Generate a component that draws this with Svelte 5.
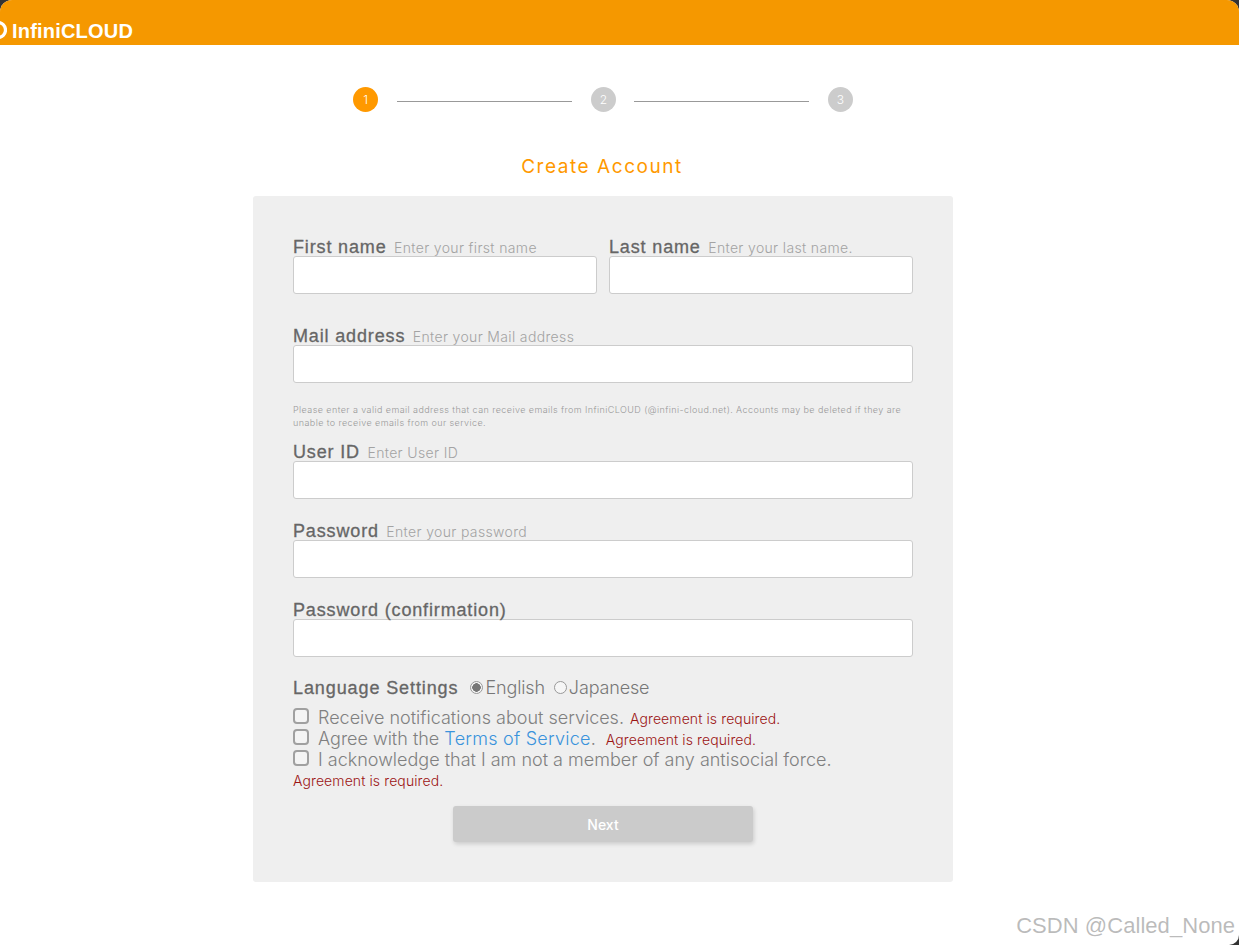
<script lang="ts">
	const steps = [1, 2, 3];
	const agreement = "Agreement is required.";
</script>

<div class="page">
	<header class="topbar">
		<div class="logo">
			<svg class="mark" width="7" height="20" viewBox="0 0 7 20">
				<circle cx="-2" cy="10" r="7.5" fill="none" stroke="#fff" stroke-width="3.2" />
			</svg>
			<span>InfiniCLOUD</span>
		</div>
	</header>

	<main class="content">
		<div class="stepper">
			{#each steps as step, i}
				{#if i > 0}
					<span class="line" class:first={i === 1}></span>
				{/if}
				<span class="step" class:active={step === 1}>{step}</span>
			{/each}
		</div>

		<h1>Create Account</h1>

		<form class="card">
			<div class="name-row">
				<div class="field">
					<label for="first"><b>First name</b> <small>Enter your first name</small></label>
					<input id="first" type="text" />
				</div>
				<div class="field">
					<label for="last"><b>Last name</b> <small>Enter your last name.</small></label>
					<input id="last" type="text" />
				</div>
			</div>

			<div class="field mail">
				<label for="mail"><b>Mail address</b> <small>Enter your Mail address</small></label>
				<input id="mail" type="text" />
			</div>
			<p class="note">Please enter a valid email address that can receive emails from InfiniCLOUD (@infini-cloud.net). Accounts may be deleted if they are unable to receive emails from our service.</p>

			<div class="field userid">
				<label for="uid"><b>User ID</b> <small>Enter User ID</small></label>
				<input id="uid" type="text" />
			</div>
			<div class="field">
				<label for="pw"><b>Password</b> <small>Enter your password</small></label>
				<input id="pw" type="password" />
			</div>
			<div class="field">
				<label for="pw2"><b>Password (confirmation)</b></label>
				<input id="pw2" type="password" />
			</div>

			<div class="language">
				<b>Language Settings</b>
				<label class="radio"><input type="radio" name="lang" checked />English</label>
				<label class="radio"><input type="radio" name="lang" />Japanese</label>
			</div>

			<div class="agree">
				<div class="check">
					<input type="checkbox" />
					<span>Receive notifications about services.</span>
					<em>{agreement}</em>
				</div>
				<div class="check">
					<input type="checkbox" />
					<span>Agree with the <a href="#terms">Terms of Service</a>.</span>
					<em class="wide">{agreement}</em>
				</div>
				<div class="check">
					<input type="checkbox" />
					<span>I acknowledge that I am not a member of any antisocial force.</span>
				</div>
				<em class="own-line">{agreement}</em>
			</div>

			<button type="button" class="next">Next</button>
		</form>
	</main>

	<span class="watermark">CSDN @Called_None</span>
</div>

<style>
	:global(body) {
		margin: 0;
		background: #333;
	}

	.page {
		position: relative;
		height: 945px;
		overflow: hidden;
		background: #fff;
		border-radius: 12px 12px 10px 0;
		font-family: "Inter", "Noto Sans CJK JP", sans-serif;
		font-weight: 300;
		color: #666;
	}

	.topbar {
		height: 45px;
		background: #f59800;
		display: flex;
		align-items: flex-end;
	}

	.logo {
		display: flex;
		align-items: center;
		gap: 5px;
		height: 27px;
		color: #fff;
		font-family: "Liberation Sans", sans-serif;
		font-size: 20px;
		font-weight: 700;
		letter-spacing: 0.2px;
	}

	.mark {
		display: block;
		margin-bottom: 4px;
	}

	.content {
		display: flex;
		flex-direction: column;
		align-items: center;
		padding-right: 33px;
	}

	.stepper {
		display: flex;
		align-items: center;
		height: 25px;
		margin-top: 42px;
	}

	.step {
		width: 25px;
		height: 25px;
		border-radius: 50%;
		background: #ccc;
		color: #fff;
		font-size: 12px;
		line-height: 25px;
		text-align: center;
	}

	.step.active {
		background: #ff9900;
	}

	.line {
		width: 175px;
		height: 1px;
		margin: 3px 19px 0 18px;
		background: #999;
	}

	.line.first {
		margin-left: 19px;
	}

	h1 {
		margin: 43px 2px 17px 0;
		font-size: 19px;
		line-height: 24px;
		font-weight: 400;
		letter-spacing: 1.55px;
		color: #ff9900;
	}

	.card {
		box-sizing: border-box;
		width: 700px;
		height: 686px;
		padding: 40px;
		background: #efefef;
		border-radius: 3px;
	}

	.name-row {
		display: grid;
		grid-template-columns: 304px 304px;
		gap: 12px;
	}

	.field {
		margin-bottom: 21px;
	}

	.name-row .field {
		margin-bottom: 31px;
	}

	.field.mail {
		margin-bottom: 0;
	}

	.field label {
		display: block;
		height: 20px;
		line-height: 22px;
		white-space: nowrap;
	}

	label b,
	.language b {
		font-family: "Liberation Sans", sans-serif;
		font-size: 18px;
		font-weight: 400;
		letter-spacing: 0.85px;
		color: #666;
		-webkit-text-stroke: 0.3px #666;
	}

	label small {
		margin-left: 3px;
		font-size: 14px;
		letter-spacing: 0.35px;
		color: #a3a3a3;
	}

	.field input {
		display: block;
		box-sizing: border-box;
		width: 100%;
		height: 38px;
		padding: 0 8px;
		background: #fff;
		border: 1px solid #ccc;
		border-radius: 3px;
		outline: none;
	}

	.note {
		margin: 20px 0 0;
		width: 620px;
		height: 38px;
		font-size: 9px;
		line-height: 13px;
		letter-spacing: 0.42px;
		color: #999;
	}

	.language {
		display: flex;
		align-items: center;
		height: 24px;
		margin-top: -2px;
		font-size: 18px;
		letter-spacing: -0.15px;
		color: #777;
	}

	.language b {
		margin-right: 12px;
		letter-spacing: 0.9px;
	}

	.radio {
		display: flex;
		align-items: center;
		margin: -2px 9px 0 0;
	}

	.radio input {
		appearance: none;
		box-sizing: border-box;
		width: 13px;
		height: 13px;
		margin: 0 2px 0 0;
		background: #f6f6f6;
		border: 1px solid #999;
		border-radius: 50%;
	}

	.radio input:checked {
		background: radial-gradient(circle, #777 0 4px, #f6f6f6 4.5px);
	}

	.agree {
		margin-top: 7px;
		font-size: 18px;
		line-height: 21px;
		color: #808080;
	}

	.check {
		display: flex;
		align-items: center;
		height: 21px;
		white-space: nowrap;
	}

	.check input {
		appearance: none;
		box-sizing: border-box;
		width: 16px;
		height: 16px;
		margin: 0 9px 3px 0;
		background: #f4f4f4;
		border: 2px solid #a0a0a0;
		border-radius: 4px;
	}

	.check a {
		color: #3a93dc;
		letter-spacing: 0.25px;
		text-decoration: none;
	}

	em {
		margin: 2px 0 0 6px;
		font-style: normal;
		font-weight: 300;
		font-size: 14px;
		letter-spacing: 0.1px;
		color: #9c1414;
	}

	em.wide {
		margin-left: 10px;
	}

	em.own-line {
		display: block;
		margin: 0;
		line-height: 21px;
	}

	.next {
		display: block;
		width: 300px;
		height: 36px;
		margin: 15px auto 0;
		padding: 0;
		border: none;
		border-radius: 3px;
		background: #cbcbcb;
		box-shadow: 1px 2px 4px rgba(0, 0, 0, 0.15);
		color: #fff;
		font-family: inherit;
		font-size: 14px;
		font-weight: 500;
	}

	.watermark {
		position: absolute;
		right: 4px;
		bottom: 6px;
		font-family: "Liberation Sans", sans-serif;
		font-size: 22px;
		letter-spacing: 0.05px;
		color: rgba(120, 120, 120, 0.5);
	}
</style>
